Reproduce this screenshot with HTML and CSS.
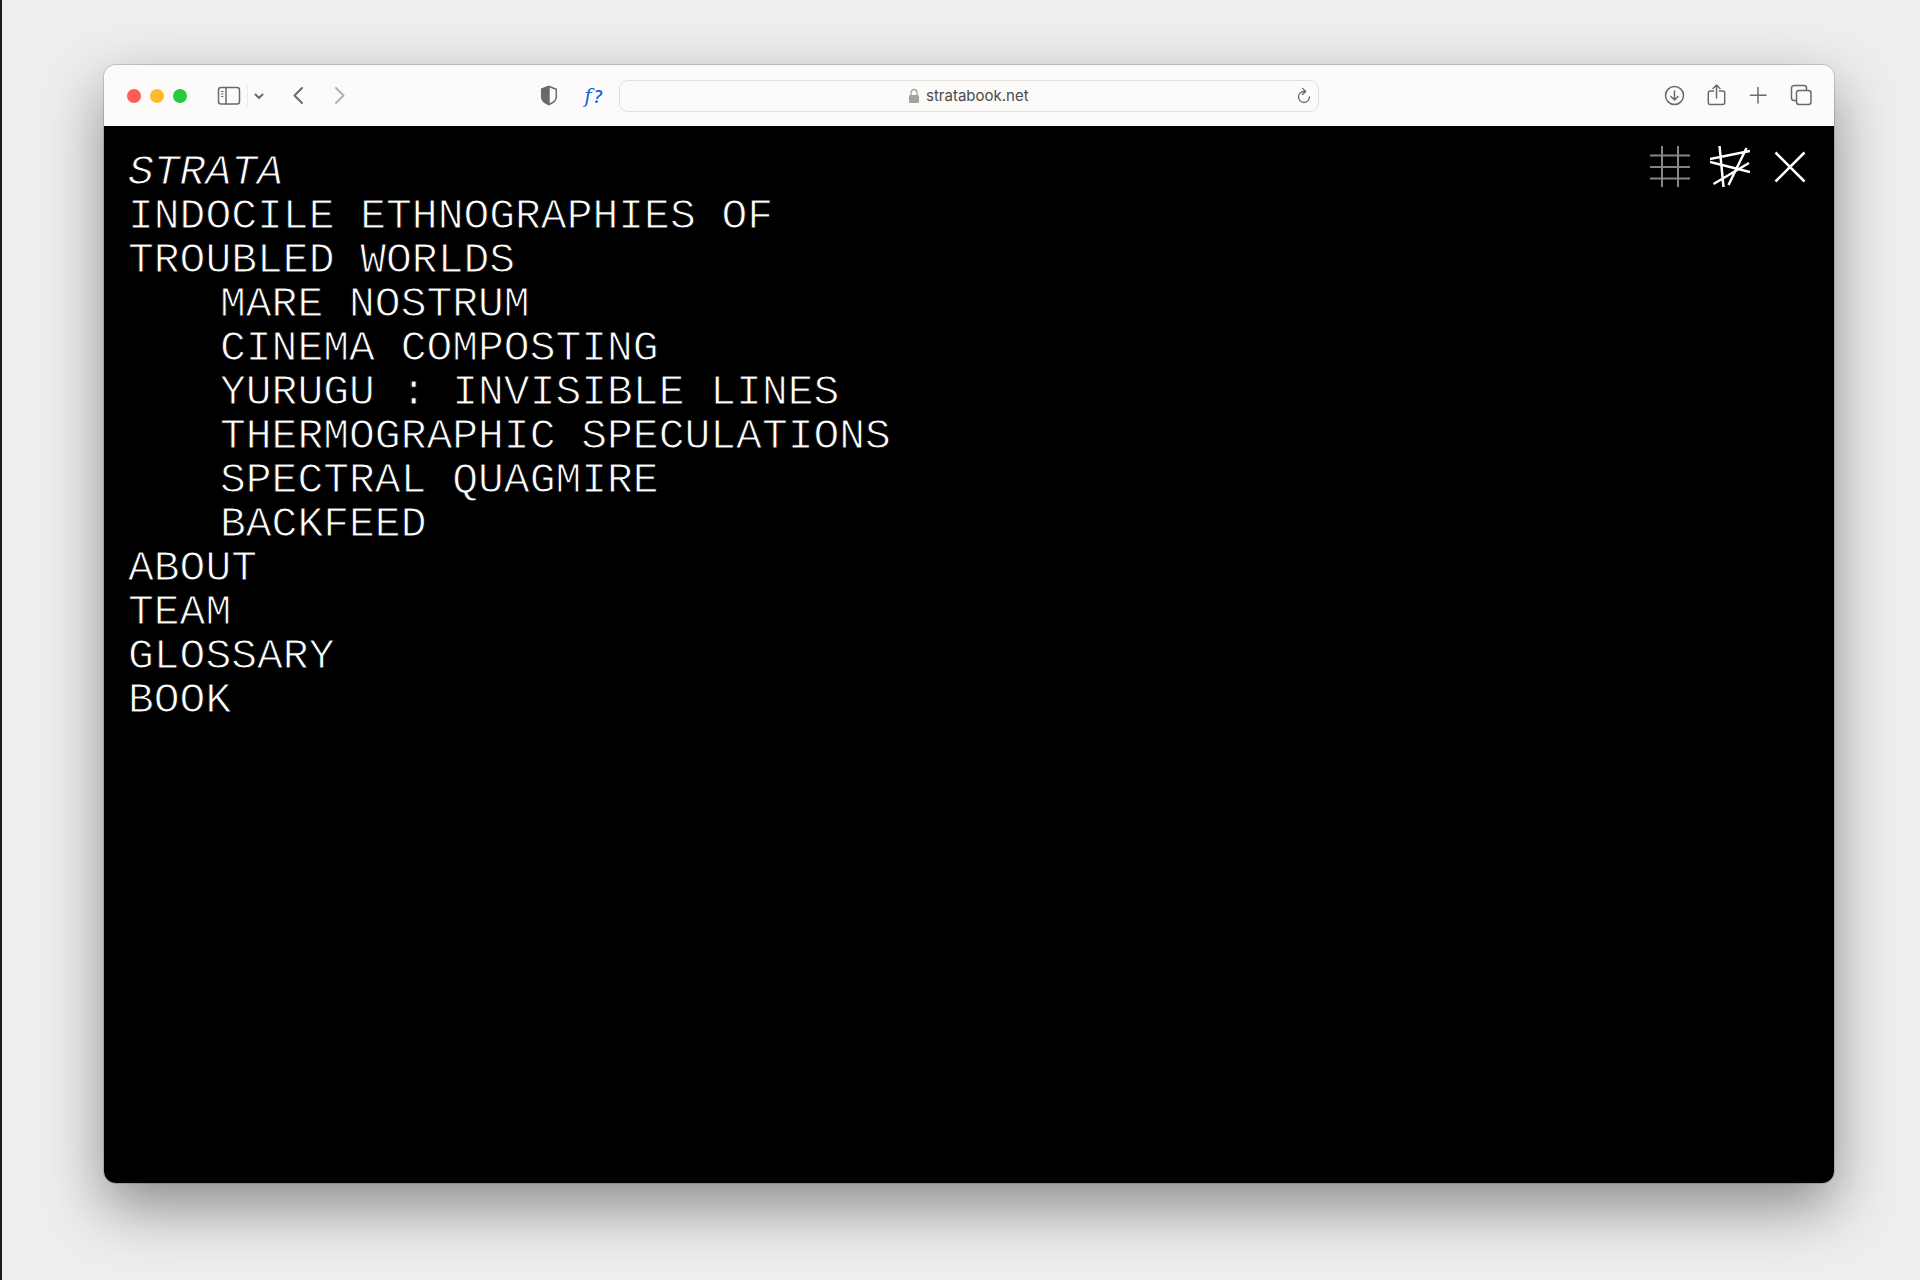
FILE: index.html
```html
<!DOCTYPE html>
<html lang="en">

<head>
    <meta charset="UTF-8">
    <meta name="viewport" content="width=device-width, initial-scale=1.0">
    <title>Strata</title>
    <link rel="stylesheet" href="styles.css">
</head>
<body>
    <div class="window">
        <header class="toolbar">
            <div class="tools tools-left">
                <div class="lights">
                    <button class="light red" aria-label="Close window"></button>
                    <button class="light yellow" aria-label="Minimize window"></button>
                    <button class="light green" aria-label="Zoom window"></button>
                </div>
                <div class="sidebar-tools">
                    <button class="tool" aria-label="Sidebar">
                        <svg width="24" height="24" viewBox="0 0 24 24">
                            <rect x="1.5" y="3.5" width="21" height="16.5" rx="2.5"/>
                            <path d="M9 3.5V20"/>
                            <path d="M4.5 7.5h1.5M4.5 10h1.5M4.5 12.5h1.5" stroke-width="1"/>
                        </svg>
                    </button>
                    <button class="tool narrow divided" aria-label="Tab groups">
                        <svg width="12" height="24" viewBox="0 0 12 24"><path d="M2.5 10.500L6 14l3.5-3.500"/></svg>
                    </button>
                </div>
                <div class="history">
                    <button class="tool narrow" aria-label="Back">
                        <svg width="12" height="24" viewBox="0 0 12 24"><path d="M10 4L2.500 11.500 10 19"/></svg>
                    </button>
                    <button class="tool narrow" aria-label="Forward" disabled>
                        <svg width="12" height="24" viewBox="0 0 12 24"><path d="M2 4l7.500 7.500L2 19"/></svg>
                    </button>
                </div>
                <div class="extensions">
                    <button class="tool" aria-label="Privacy report">
                        <svg width="24" height="24" viewBox="0 0 24 24">
                            <path d="M12 2.500l7.300 2.800v8c0 3.400-3.500 5.600-7.300 7.200-3.800-1.600-7.300-3.800-7.300-7.200v-8z"/>
                            <path class="solid" d="M12 2.500v18c-3.800-1.600-7.300-3.800-7.300-7.200v-8z"/>
                        </svg>
                    </button>
                    <button class="tool fonts" aria-label="Fonts"><i>f</i><b>?</b></button>
                </div>
            </div>

            <form class="address">
                <label class="site">
                    <svg width="10" height="16" viewBox="0 0 10 16">
                        <path d="M2 8V5a3 3.500 0 0 1 6 0v3" fill="none" stroke="#a2a2a1" stroke-width="1.300"/>
                        <rect y="7" width="10" height="8" rx="1.500" fill="#a2a2a1"/>
                    </svg>
                    <input type="text" value="stratabook.net" aria-label="Address">
                </label>
                <button class="tool reload" type="button" aria-label="Reload">
                    <svg width="16" height="18" viewBox="0 0 16 18">
                        <path d="M8.500 4.500H8a5.500 5.500 0 1 0 5.500 5.500M6.500 1.500l3.300 3-3.300 3" stroke-width="1.300"/>
                    </svg>
                </button>
            </form>

            <div class="tools tools-right">
                <button class="tool" aria-label="Downloads">
                    <svg width="24" height="24" viewBox="0 0 24 24">
                        <circle cx="11.500" cy="11.500" r="9"/>
                        <path d="M11.500 7v9M8 12.500l3.500 3.500 3.500-3.500"/>
                    </svg>
                </button>
                <button class="tool" aria-label="Share">
                    <svg width="24" height="24" viewBox="0 0 24 24">
                        <path d="M8.500 7H5.300a2 2 0 0 0-2 2v9.500a2 2 0 0 0 2 2h12.400a2 2 0 0 0 2-2V9a2 2 0 0 0-2-2h-3.200M11.500 14V1M8 4.500L11.500 1 15 4.500"/>
                    </svg>
                </button>
                <button class="tool" aria-label="New tab">
                    <svg width="24" height="24" viewBox="0 0 24 24"><path d="M11 3.500v15.500M3.500 11.200H19"/></svg>
                </button>
                <button class="tool" aria-label="Tab overview">
                    <svg width="24" height="24" viewBox="0 0 24 24">
                        <path d="M7 16.500H5a2.500 2.500 0 0 1-2.500-2.500V4A2.500 2.500 0 0 1 5 1.500h10A2.500 2.500 0 0 1 17.500 4v2"/>
                        <rect x="7.500" y="6.500" width="14.500" height="14" rx="2.500"/>
                    </svg>
                </button>
            </div>
        </header>

        <main class="page">
            <nav class="menu">
                <ul>
                    <li><a href="#"><em>STRATA</em></a></li>
                    <li>
                        <a href="#">INDOCILE ETHNOGRAPHIES OF<br>TROUBLED WORLDS</a>
                        <ul class="chapters">
                            <li><a href="#">MARE NOSTRUM</a></li>
                            <li><a href="#">CINEMA COMPOSTING</a></li>
                            <li><a href="#">YURUGU : INVISIBLE LINES</a></li>
                            <li><a href="#">THERMOGRAPHIC SPECULATIONS</a></li>
                            <li><a href="#">SPECTRAL QUAGMIRE</a></li>
                            <li><a href="#">BACKFEED</a></li>
                        </ul>
                    </li>
                    <li><a href="#">ABOUT</a></li>
                    <li><a href="#">TEAM</a></li>
                    <li><a href="#">GLOSSARY</a></li>
                    <li><a href="#">BOOK</a></li>
                </ul>
            </nav>
            <div class="views">
                <button class="view muted" aria-label="Grid view">
                    <svg width="40" height="42" viewBox="0 0 40 42"><path d="M12 0v41M28 0v41M0 9.500h40M0 21h40M0 32.500h40"/></svg>
                </button>
                <button class="view" aria-label="Tangled view">
                    <svg width="40" height="42" viewBox="0 0 40 42"><path d="M9.500 0l4 41M0 13l40-8M0 16l40 10M3.500 38L39 17M36.500 2L18.500 39"/></svg>
                </button>
                <button class="view" aria-label="Close menu">
                    <svg width="40" height="42" viewBox="0 0 40 42"><path d="M5.500 6.500l29 29M34.500 6.500l-29 29"/></svg>
                </button>
            </div>
        </main>
    </div>
</body>

</html>
```
FILE: styles.css
```css
* {
    box-sizing: border-box;
}

body {
    margin: 0;
    min-height: 100vh;
    display: flex;
    padding: 65px 86px 97px 102px;
    border-left: 2px solid #1b1b1d;
    background-color: #eeeeee;
    font-family: Inter, sans-serif;
}

button {
    padding: 0;
    border: none;
    background: none;
    cursor: pointer;
}

svg {
    display: block;
}

.window {
    flex: 1;
    display: flex;
    flex-direction: column;
    border-radius: 12px;
    overflow: hidden;
    box-shadow: 0 0 0 1px rgba(0, 0, 0, 0.15), 0 24px 60px rgba(0, 0, 0, 0.42);
}

/* browser toolbar */
.toolbar {
    display: grid;
    grid-template-columns: 1fr minmax(0, 700px) 1fr;
    align-items: center;
    height: 61px;
    background-color: #fcfbf9;
}

.tools {
    display: flex;
    align-items: center;
}

.tools-left {
    padding: 0 14px 0 23px;
}

.tools-right {
    justify-content: flex-end;
    gap: 18px;
    padding-right: 21px;
}

.lights {
    display: flex;
    gap: 9px;
    margin-right: 30px;
}

.light {
    width: 14px;
    height: 14px;
    border-radius: 50%;
}

.red {
    background-color: #ff5c57;
}

.yellow {
    background-color: #fdba2c;
}

.green {
    background-color: #28c840;
}

.tool {
    width: 24px;
    height: 24px;
}

.tool svg {
    fill: none;
    stroke: #6b6a69;
    stroke-width: 1.5;
    stroke-linecap: round;
    stroke-linejoin: round;
}

.tool .solid {
    fill: #6b6a69;
}

.tool:disabled {
    opacity: 0.5;
}

.narrow {
    width: 12px;
}

.narrow svg {
    stroke-width: 2;
}

.sidebar-tools {
    display: flex;
    gap: 6px;
    margin-right: 27px;
}

.divided {
    width: 18px;
    padding-left: 5px;
    border-left: 1px solid #eeedeb;
}

.history {
    display: flex;
    gap: 30px;
}

.extensions {
    display: flex;
    gap: 20px;
    margin-left: auto;
}

.fonts {
    color: #1261e6;
    white-space: nowrap;
}

.fonts i {
    margin-right: 2px;
    font: italic 20px/24px "DejaVu Serif", serif;
}

.fonts b {
    font: italic 600 18px/24px "Open Sans", sans-serif;
}

.address {
    display: grid;
    grid-template-columns: 1fr auto 1fr;
    align-items: center;
    height: 32px;
    padding: 0 6px;
    border: 1px solid #e0dfdd;
    border-radius: 9px;
}

.site {
    grid-column: 2;
    display: flex;
    align-items: center;
    gap: 7px;
    padding-left: 3px;
}

.site input {
    width: 106px;
    padding: 0;
    border: none;
    outline: none;
    background: none;
    color: #4a4a49;
    font-family: Inter, sans-serif;
    font-size: 15px;
    line-height: 20px;
}

.reload {
    justify-self: end;
    width: 16px;
    height: 18px;
}

/* site menu */
.page {
    flex: 1;
    display: flex;
    justify-content: space-between;
    align-items: flex-start;
    padding: 20px 24px;
    background-color: #000;
}

/* black outline keeps the letters thin */
.menu {
    padding-top: 5px;
    color: #fff;
    font-family: "Liberation Mono", monospace;
    font-size: 43px;
    line-height: 44px;
    -webkit-text-stroke: 1px #000;
}

.menu ul {
    margin: 0;
    padding: 0;
    list-style: none;
}

.menu .chapters {
    padding-left: 92px;
}

.menu a {
    display: block;
    color: inherit;
    text-decoration: none;
}

.menu a:hover {
    text-decoration: underline;
}

.views {
    display: flex;
    gap: 20px;
}

.view svg {
    fill: none;
    stroke: #fff;
    stroke-width: 2.5;
}

.muted svg {
    stroke: #858585;
    stroke-width: 2;
}
```
